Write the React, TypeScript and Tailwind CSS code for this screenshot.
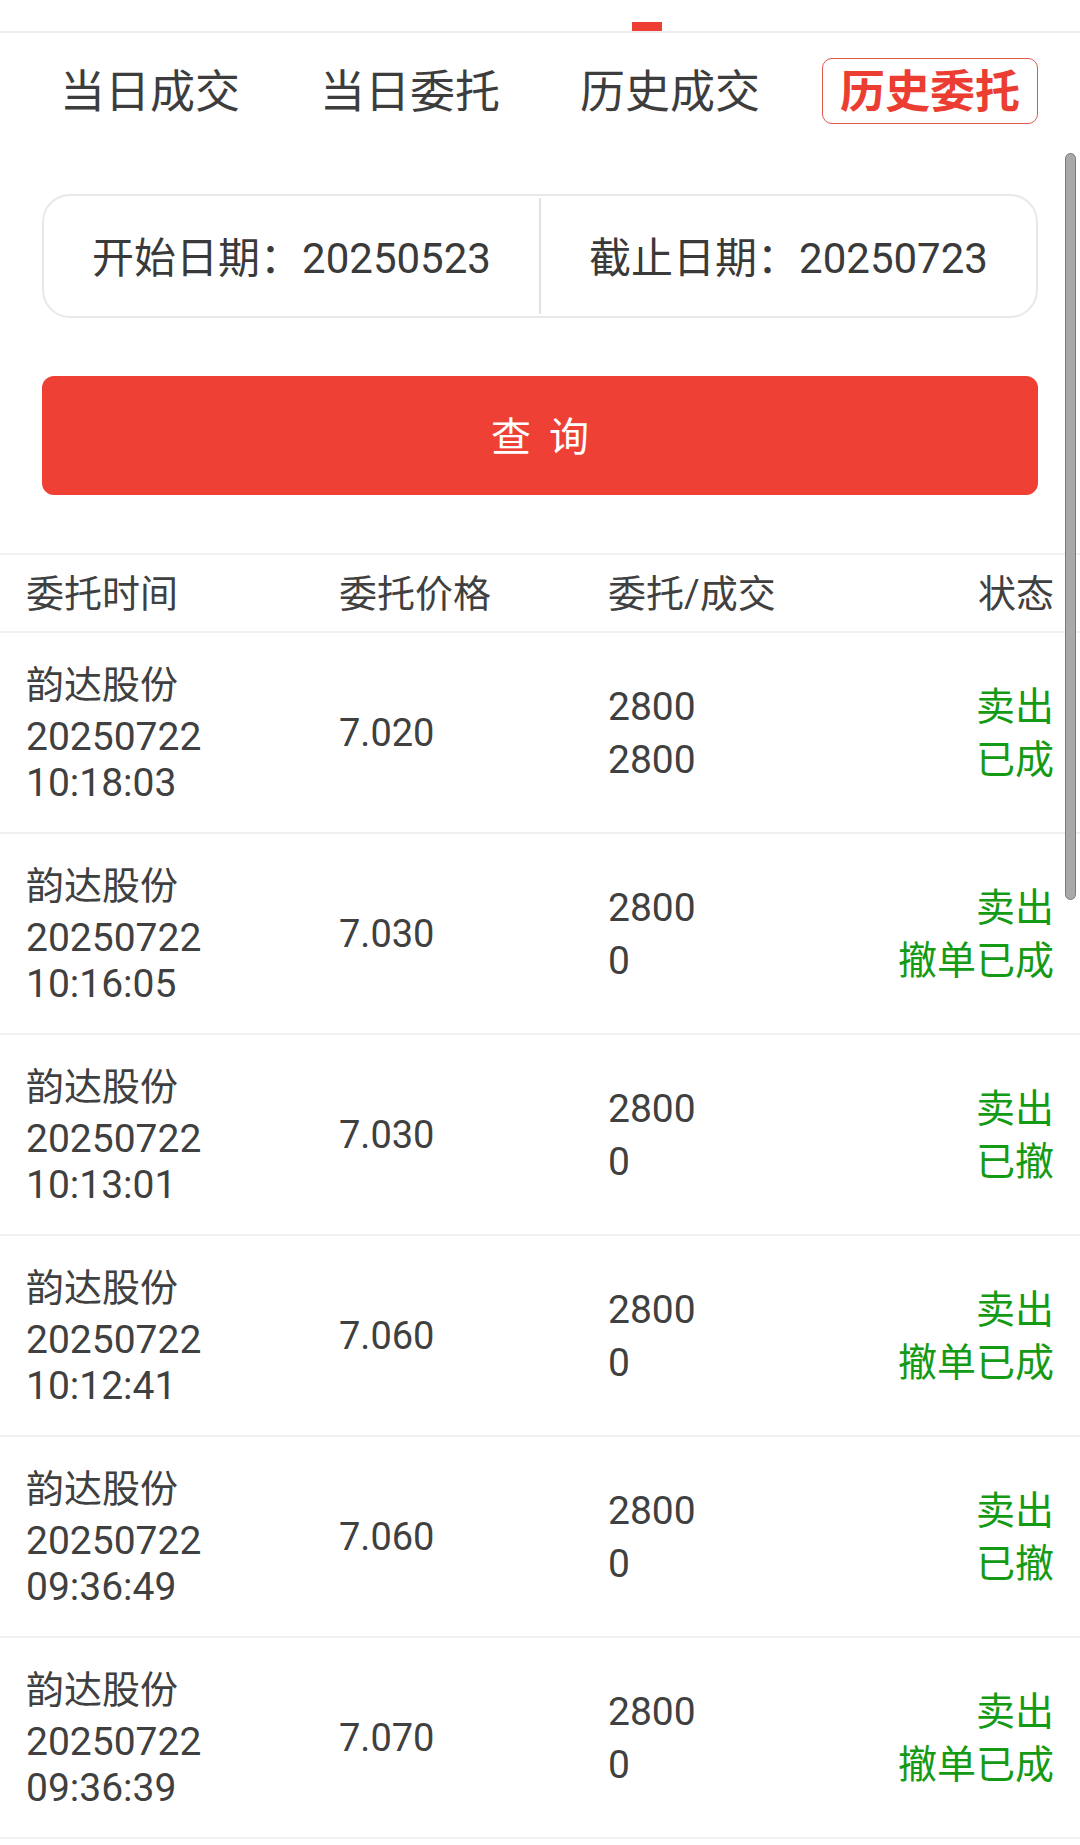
import React from 'react';

interface OrderRow {
  name: string;
  date: string;
  time: string;
  price: string;
  orderQty: string;
  dealQty: string;
  side: string;
  status: string;
}

const rows: OrderRow[] = [
  { name: '韵达股份', date: '20250722', time: '10:18:03', price: '7.020', orderQty: '2800', dealQty: '2800', side: '卖出', status: '已成' },
  { name: '韵达股份', date: '20250722', time: '10:16:05', price: '7.030', orderQty: '2800', dealQty: '0', side: '卖出', status: '撤单已成' },
  { name: '韵达股份', date: '20250722', time: '10:13:01', price: '7.030', orderQty: '2800', dealQty: '0', side: '卖出', status: '已撤' },
  { name: '韵达股份', date: '20250722', time: '10:12:41', price: '7.060', orderQty: '2800', dealQty: '0', side: '卖出', status: '撤单已成' },
  { name: '韵达股份', date: '20250722', time: '09:36:49', price: '7.060', orderQty: '2800', dealQty: '0', side: '卖出', status: '已撤' },
  { name: '韵达股份', date: '20250722', time: '09:36:39', price: '7.070', orderQty: '2800', dealQty: '0', side: '卖出', status: '撤单已成' },
];

const tabs = ['当日成交', '当日委托', '历史成交', '历史委托'];

export default function App() {
  const activeTab = 3;

  return (
    <div
      className="relative w-[1080px] h-[1845px] overflow-hidden bg-white text-[#444]"
      style={{ fontFamily: 'Roboto, "Noto Sans CJK SC", sans-serif' }}
    >
      {/* top strip with active indicator */}
      <div className="relative h-[33px] border-b-2 border-[#eeeeee]">
        <div className="absolute left-[632px] bottom-0 w-[30px] h-[9px] bg-[#ee3f34]" />
      </div>

      {/* Tabs */}
      <div className="grid grid-cols-4 px-5 pt-[25px]">
        {tabs.map((t, i) => (
          <div key={t} className="flex justify-center">
            <div
              className={`h-[66px] flex items-center pt-[4px] px-[17px] text-[45px] leading-normal rounded-[10px] border ${
                i === activeTab
                  ? 'border-[#e0574b] text-[#ec3d32] font-bold'
                  : 'border-transparent text-[#3d3d3d]'
              }`}
            >
              {t}
            </div>
          </div>
        ))}
      </div>

      {/* Date range */}
      <div className="mx-[42px] mt-[70px] h-[124px] flex rounded-[28px] border-2 border-[#e8e8e8]">
        <div className="flex-1 flex items-center justify-center pt-[4px] text-[42px] text-[#3a3a3a]">
          开始日期：20250523
        </div>
        <div className="w-[2px] bg-[#e2e2e2] my-[2px]" />
        <div className="flex-1 flex items-center justify-center pt-[4px] text-[42px] text-[#3a3a3a]">
          截止日期：20250723
        </div>
      </div>

      {/* Query button */}
      <button className="mx-[42px] mt-[58px] w-[996px] h-[119px] rounded-[12px] bg-[#ee4035] text-white text-[40px] tracking-[18px] flex items-center justify-center">
        <span className="pl-[18px] pt-[4px]">查询</span>
      </button>

      {/* Table */}
      <div className="mt-[58px] border-t-2 border-[#f0f0f0]">
        <div className="grid grid-cols-[313px_269px_1fr_auto] items-center h-[78px] pt-[2px] pl-[26px] pr-[26px] text-[38px] text-[#404040] border-b-2 border-[#f0f0f0]">
          <div>委托时间</div>
          <div>委托价格</div>
          <div>委托/成交</div>
          <div className="text-right">状态</div>
        </div>

        {rows.map((r, idx) => (
          <div
            key={idx}
            className="grid grid-cols-[313px_269px_1fr_auto] items-center h-[201px] pt-[2px] pl-[26px] pr-[26px] border-b-2 border-[#f0f0f0] text-[#404040]"
          >
            <div className="flex flex-col">
              <div className="text-[38px] leading-[46px] mb-[6px]">{r.name}</div>
              <div className="text-[39px] leading-[46px]">{r.date}</div>
              <div className="text-[39px] leading-[46px]">{r.time}</div>
            </div>
            <div className="text-[38px]">{r.price}</div>
            <div className="flex flex-col text-[39px] leading-[53px]">
              <div>{r.orderQty}</div>
              <div>{r.dealQty}</div>
            </div>
            <div className="flex flex-col items-end text-[39px] leading-[53px] text-[#159a15]">
              <div>{r.side}</div>
              <div>{r.status}</div>
            </div>
          </div>
        ))}
      </div>

      {/* scrollbar overlay */}
      <div className="absolute left-[1065px] top-[153px] w-[11px] h-[747px] rounded-full bg-[#a9a9a9] border border-[#7a7a7a]" />
    </div>
  );
}
